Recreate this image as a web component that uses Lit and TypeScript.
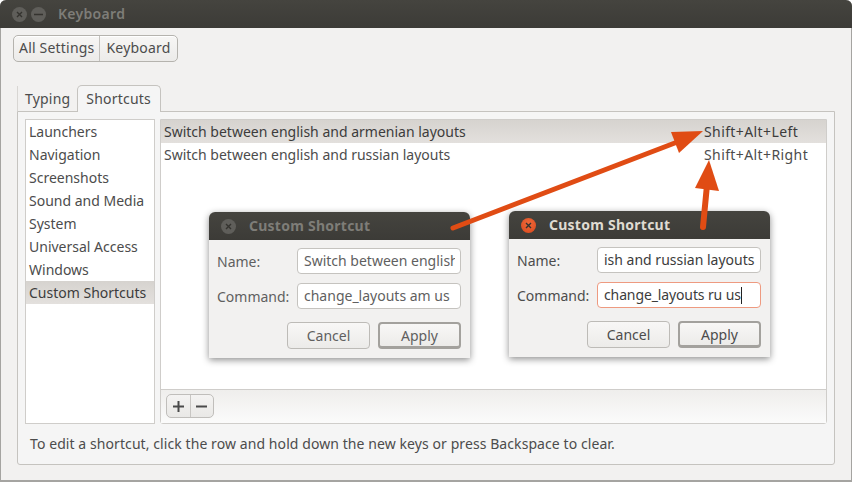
import { LitElement, html, css } from "lit";
import { customElement } from "lit/decorators.js";

const categories = ["Launchers", "Navigation", "Screenshots", "Sound and Media", "System", "Universal Access", "Windows", "Custom Shortcuts"];

@customElement("app-root")
export class AppRoot extends LitElement {
  static styles = css`
    :host { display: block; width: 852px; height: 482px; position: relative; overflow: hidden; background: #fff;
      font-family: "Noto Sans", sans-serif; font-size: 14px; color: #4c4c4c; }
    .win { width: 852px; height: 482px; box-sizing: border-box; display: flex; flex-direction: column; background: #f2f1f0;
      border-left: 1px solid #a5a4a1; border-right: 1px solid #a5a4a1; border-bottom: 2px solid #a5a4a1; border-radius: 6px 6px 0 0; }
    .titlebar { height: 28px; flex: none; display: flex; align-items: center; background: linear-gradient(#45443f, #3c3b37);
      margin: 0 -1px; border-radius: 6px 6px 0 0; padding-left: 12px; gap: 4px; }
    .wbtn { width: 15px; height: 15px; border-radius: 50%; background: #5f5e5a; display: flex; align-items: center; justify-content: center; flex: none; }
    .wbtn svg { display: block; }
    .wtitle { font-weight: 600; font-size: 14px; color: #7e7d78; margin-left: 8px; letter-spacing: 0.3px; padding-bottom: 2px; }
    .crumbs { display: flex; align-self: flex-start; margin: 7px 0 0 12px; height: 27px; box-sizing: border-box; border: 1px solid #b5b3ae; border-radius: 5px;
      background: linear-gradient(#f7f6f5, #ecebe9); box-shadow: 0 1px 0 #fff inset; letter-spacing: 0.2px; }
    .crumb { padding: 0 5px; line-height: 24px; }
    .crumb + .crumb { border-left: 1px solid #c4c2be; padding: 0 6px; }
    .tabs { display: flex; align-items: flex-end; margin: 23px 0 -1px 16px; height: 27px; position: relative; z-index: 1; letter-spacing: 0.2px; }
    .tab { padding: 0 8px; }
    .tab.first { border-left: 1px solid #d8d6d3; height: 25px; line-height: 26px; padding: 0 7px; box-sizing: border-box; margin-bottom: 1px; }
    .tab.active { height: 27px; box-sizing: border-box; background: #f5f5f5; border: 1px solid #c5c3bf; border-bottom: none; border-radius: 5px 5px 0 0; line-height: 25px; padding: 0 9px 0 8px; }
    .panel { margin-left: 16px; width: 818px; height: 354px; flex: none; box-sizing: border-box; background: #f5f5f5; border: 1px solid #c5c3bf; border-radius: 0 0 3px 3px;
      padding: 7px 7px 0 7px; display: flex; flex-direction: column; }
    .cols { display: flex; gap: 5px; height: 305px; flex: none; }
    .side { width: 130px; box-sizing: border-box; background: #fff; border: 1px solid #cfcdca; flex: none; }
    .side .item { height: 23px; line-height: 23px; padding-left: 3px; white-space: nowrap; }
    .side .item.sel { background: linear-gradient(#d6d3cf, #e3e0dd); color: #3c3c3c; }
    .main { flex: 1; box-sizing: border-box; border: 1px solid #cfcdca; border-radius: 0 0 3px 3px; display: flex; flex-direction: column; background: #fff; }
    .list { flex: 1; background: #fff; }
    .row { height: 23px; line-height: 23px; display: flex; justify-content: space-between; padding-left: 3px; white-space: nowrap; }
    .row.sel { background: linear-gradient(#d6d3cf, #e3e0dd); color: #3c3c3c; }
    .row .keys { width: 122px; flex: none; letter-spacing: 0.4px; }
    .bar { height: 34px; flex: none; box-sizing: border-box; border-top: 1px solid #cfcdca; background: linear-gradient(#efeeec, #fbfbfb); padding: 4px 5px; }
    .pm { width: 48px; height: 24px; box-sizing: border-box; border: 1px solid #c0bebb; border-radius: 5px; display: flex; background: linear-gradient(#f4f3f2, #e9e8e6); }
    .pm span { flex: 1; display: flex; align-items: center; justify-content: center; }
    .pm span + span { border-left: 1px solid #c8c6c3; }
    .hint { margin: 10px 0 0 5px; line-height: 20px; white-space: nowrap; letter-spacing: 0.08px; }
    .dialog { position: absolute; width: 261px; height: 146px; box-sizing: border-box; background: #f2f1f0; border-radius: 6px 6px 0 0;
      box-shadow: 0 2px 7px rgba(0,0,0,.45); display: flex; flex-direction: column; }
    .d1 { left: 209px; top: 212px; }
    .d2 { left: 509px; top: 211px; }
    .dtitle { height: 28px; flex: none; background: linear-gradient(#45443f, #3c3b37); border-radius: 6px 6px 0 0; display: flex; align-items: center; padding-left: 12px; }
    .dtitle .t { margin-left: 13px; font-weight: 700; font-size: 14px; letter-spacing: 0.25px; color: #7e7d78; padding-bottom: 2px; }
    .d2 .dtitle .t { color: #dfdbd2; }
    .close-on { background: radial-gradient(circle at 50% 35%, #f0693a, #d8481c); }
    .dbody { flex: 1; padding: 8px 9px 9px 8px; display: flex; flex-direction: column; gap: 9px; }
    .field { display: flex; align-items: center; justify-content: space-between; height: 26px; }
    .input { width: 164px; height: 26px; box-sizing: border-box; border: 1px solid #c5c3bf; border-radius: 4px; background: #fff; padding: 0 5px 0 6px; line-height: 24px; white-space: nowrap; color: #3c3c3c; }
    .input.focus { border-color: #ee9a80; letter-spacing: -0.12px; }
    .clip { width: 151px; overflow: hidden; }
    .cursor { display: inline-block; width: 1px; height: 17px; background: #222; vertical-align: -4px; }
    .btns { display: flex; justify-content: flex-end; gap: 8px; margin-top: 4px; }
    .btn { width: 83px; height: 27px; box-sizing: border-box; border: 1px solid #bdbbb7; border-radius: 4px; background: linear-gradient(#f8f7f6, #ecebe9); text-align: center; line-height: 25px; }
    .btn.def { border: 2px solid #a3a19d; border-bottom-width: 3px; line-height: 23px; }
    .d1 .dbody, .d1 .btn, .d1 .input { color: #5f5f5f; }
    .arrows { position: absolute; left: 0; top: 0; pointer-events: none; }
  `;

  render() {
    const x = html`<svg width="7" height="7" viewBox="0 0 7 7"><path d="M1 1l5 5M6 1L1 6" stroke="#34332f" stroke-width="1.4" fill="none"/></svg>`;
    return html`
      <div class="win">
        <div class="titlebar">
          <div class="wbtn">${x}</div>
          <div class="wbtn"><svg width="9" height="3" viewBox="0 0 9 3"><path d="M0 1.5h9" stroke="#34332f" stroke-width="1.5"/></svg></div>
          <div class="wtitle">Keyboard</div>
        </div>
        <div class="crumbs"><div class="crumb">All Settings</div><div class="crumb">Keyboard</div></div>
        <div class="tabs"><div class="tab first">Typing</div><div class="tab active">Shortcuts</div></div>
        <div class="panel">
          <div class="cols">
            <div class="side">${categories.map((c, i) => html`<div class="item ${i === 7 ? "sel" : ""}">${c}</div>`)}</div>
            <div class="main">
              <div class="list">
                <div class="row sel"><span>Switch between english and armenian layouts</span><span class="keys">Shift+Alt+Left</span></div>
                <div class="row"><span>Switch between english and russian layouts</span><span class="keys">Shift+Alt+Right</span></div>
              </div>
              <div class="bar"><div class="pm">
                <span><svg width="11" height="11" viewBox="0 0 11 11"><path d="M5.5 0v11M0 5.5h11" stroke="#4a4a4a" stroke-width="2"/></svg></span>
                <span><svg width="11" height="3" viewBox="0 0 11 3"><path d="M0 1.5h11" stroke="#4a4a4a" stroke-width="2"/></svg></span>
              </div></div>
            </div>
          </div>
          <div class="hint">To edit a shortcut, click the row and hold down the new keys or press Backspace to clear.</div>
        </div>
      </div>

      <div class="dialog d1">
        <div class="dtitle"><div class="wbtn">${x}</div><div class="t">Custom Shortcut</div></div>
        <div class="dbody">
          <div class="field"><span>Name:</span><div class="input"><div class="clip">Switch between english</div></div></div>
          <div class="field"><span>Command:</span><div class="input">change_layouts am us</div></div>
          <div class="btns"><div class="btn">Cancel</div><div class="btn def">Apply</div></div>
        </div>
      </div>

      <div class="dialog d2">
        <div class="dtitle"><div class="wbtn close-on">${x}</div><div class="t">Custom Shortcut</div></div>
        <div class="dbody">
          <div class="field"><span>Name:</span><div class="input">ish and russian layouts</div></div>
          <div class="field"><span>Command:</span><div class="input focus">change_layouts ru us<span class="cursor"></span></div></div>
          <div class="btns"><div class="btn">Cancel</div><div class="btn def">Apply</div></div>
        </div>
      </div>

      <svg class="arrows" width="852" height="482" viewBox="0 0 852 482">
        <path d="M453 228L680 141" stroke="#e04c14" stroke-width="5" stroke-linecap="round" fill="none"/>
        <path d="M703 131L671 132L679 153Z" fill="#e04c14"/>
        <path d="M703 227L707 185" stroke="#e04c14" stroke-width="6" stroke-linecap="round" fill="none"/>
        <path d="M709 160L695 188L719 191Z" fill="#e04c14"/>
      </svg>
    `;
  }
}
